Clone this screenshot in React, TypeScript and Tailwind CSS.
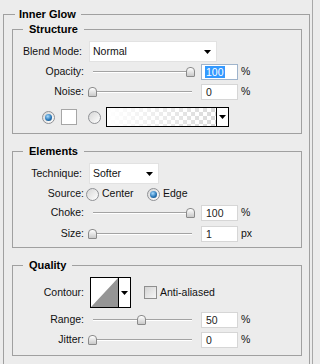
import React from "react";

const FONT = "font-['Liberation_Sans',Arial,sans-serif]";

function Arrow() {
  return (
    <svg width="7" height="4" viewBox="0 0 7 4" className="shrink-0">
      <polygon points="0,0 7,0 3.5,4" fill="#000" />
    </svg>
  );
}

function Radio({ checked }: { checked?: boolean }) {
  return (
    <div className="w-[13px] h-[13px] rounded-full border border-[#8f9195] bg-linear-to-br from-[#d6d6d6] to-white flex items-center justify-center shrink-0">
      {checked && (
        <div className="w-[7px] h-[7px] rounded-full bg-[radial-gradient(circle_at_40%_35%,#a8dcff,#2a78b8_55%,#0d3e6a)]" />
      )}
    </div>
  );
}

function Thumb({ left }: { left: number }) {
  return (
    <div
      className="absolute top-[3px] w-[9px] h-[10px] rounded-t-[4px] rounded-b-[1px] border border-[#8a8a8a] bg-linear-to-b from-white to-[#c9c9c9]"
      style={{ left }}
    />
  );
}

function Slider({ value }: { value: number }) {
  return (
    <div className="relative w-[107px] h-[16px] shrink-0 ml-[4px]">
      <div className="absolute left-[5px] right-[3px] top-[7px] h-px bg-[#a3a3a3]" />
      <div className="absolute left-[5px] right-[3px] top-[8px] h-px bg-white" />
      <Thumb left={Math.round((value / 100) * 98)} />
    </div>
  );
}

function NumInput({ value, selected }: { value: string; selected?: boolean }) {
  return (
    <div
      className={`ml-[6px] w-[37px] h-[16px] bg-white border ${
        selected ? "border-[#9fb4cc]" : "border-[#d6d6d6]"
      } flex items-center pl-[3px] text-[10.5px] leading-none text-[#222] shrink-0`}
    >
      {selected ? (
        <span className="bg-[#3399ff] text-white px-px leading-[12px]">{value}</span>
      ) : (
        <span className="pl-px">{value}</span>
      )}
    </div>
  );
}

function SliderRow({
  label,
  value,
  text,
  unit,
  selected,
  mt,
}: {
  label: string;
  value: number;
  text: string;
  unit: string;
  selected?: boolean;
  mt: string;
}) {
  return (
    <div className={`flex items-center h-[16px] ${mt}`}>
      <div className="w-[71px] text-right shrink-0">{label}</div>
      <Slider value={value} />
      <NumInput value={text} selected={selected} />
      <div className="ml-[3px]">{unit}</div>
    </div>
  );
}

function Select({ text, width }: { text: string; width: string }) {
  return (
    <div
      className={`ml-[7px] ${width} h-[21px] bg-white border border-[#e2e2e2] flex items-center justify-between pl-[3px] pr-[5px] shrink-0`}
    >
      <span>{text}</span>
      <Arrow />
    </div>
  );
}

function GradientBox() {
  return (
    <div className="ml-[5px] w-[123px] h-[20px] border border-black flex shrink-0">
      <svg width="109" height="18" className="block">
        <defs>
          <pattern id="chk" width="8" height="8" patternUnits="userSpaceOnUse">
            <rect width="8" height="8" fill="#ffffff" />
            <rect width="4" height="4" fill="#d9d9d9" />
            <rect x="4" y="4" width="4" height="4" fill="#d9d9d9" />
          </pattern>
          <linearGradient id="fade" x1="0" x2="1" y1="0" y2="0">
            <stop offset="0" stopColor="#fff" stopOpacity="1" />
            <stop offset="1" stopColor="#fff" stopOpacity="0" />
          </linearGradient>
        </defs>
        <rect width="109" height="18" fill="url(#chk)" />
        <rect width="109" height="18" fill="url(#fade)" />
      </svg>
      <div className="w-px bg-black" />
      <div className="flex-1 bg-white flex items-center justify-center">
        <Arrow />
      </div>
    </div>
  );
}

function ContourBox() {
  return (
    <div className="ml-[6px] w-[41px] h-[31px] border border-black flex shrink-0">
      <svg width="27" height="29" className="block">
        <rect width="27" height="29" fill="#fff" />
        <polygon points="0,29 27,0 27,29" fill="#959595" />
      </svg>
      <div className="w-px bg-black" />
      <div className="flex-1 bg-white flex items-center justify-center">
        <Arrow />
      </div>
    </div>
  );
}

function Box({
  title,
  mt,
  pb,
  children,
}: {
  title: string;
  mt: string;
  pb: string;
  children: React.ReactNode;
}) {
  return (
    <fieldset className={`ml-[8px] w-[290px] border border-[#a0a0a0] ${mt} ${pb}`}>
      <legend className="ml-[10px] pl-[6px] pr-[6px] font-bold text-[11px] leading-[13px] h-[13px] text-black">
        {title}
      </legend>
      {children}
    </fieldset>
  );
}

export default function App() {
  return (
    <div className={`w-[320px] h-[364px] overflow-hidden bg-[#ececec] ${FONT} text-[10.5px] text-[#111]`}>
      <div className="w-[313px] pt-[8px] border-r border-[#a8a8a8] h-[364px]">
        <fieldset className="ml-[3px] w-[307px] border border-[#a0a0a0] pb-[30px]">
          <legend className="ml-[11px] pl-[4px] pr-[5px] font-bold text-[11px] leading-[13px] h-[13px] text-black">
            Inner Glow
          </legend>

          <Box title="Structure" mt="mt-[2px]" pb="pb-[6px]">
            <div className="flex items-center h-[21px] mt-[5px]">
              <div className="w-[69px] text-right shrink-0">Blend Mode:</div>
              <Select text="Normal" width="w-[128px]" />
            </div>
            <SliderRow label="Opacity:" value={100} text="100" unit="%" selected mt="mt-[2px]" />
            <SliderRow label="Noise:" value={0} text="0" unit="%" mt="mt-[4px]" />
            <div className="flex items-center h-[20px] mt-[7px]">
              <div className="ml-[29px]">
                <Radio checked />
              </div>
              <div className="ml-[6px] w-[16px] h-[16px] bg-white border border-[#a6a6a6] shrink-0" />
              <div className="ml-[11px]">
                <Radio />
              </div>
              <GradientBox />
            </div>
          </Box>

          <Box title="Elements" mt="mt-[11px]" pb="pb-[5px]">
            <div className="flex items-center h-[21px] mt-[5px]">
              <div className="w-[69px] text-right shrink-0">Technique:</div>
              <Select text="Softer" width="w-[70px]" />
            </div>
            <div className="flex items-center h-[16px] mt-[2px]">
              <div className="w-[71px] text-right shrink-0">Source:</div>
              <div className="ml-[2px]">
                <Radio />
              </div>
              <span className="ml-[3px] w-[45px]">Center</span>
              <Radio checked />
              <span className="ml-[3px]">Edge</span>
            </div>
            <SliderRow label="Choke:" value={100} text="100" unit="%" mt="mt-[3px]" />
            <SliderRow label="Size:" value={0} text="1" unit="px" mt="mt-[5px]" />
          </Box>

          <Box title="Quality" mt="mt-[11px]" pb="pb-[7px]">
            <div className="flex items-center h-[31px] mt-[5px]">
              <div className="w-[71px] text-right shrink-0">Contour:</div>
              <ContourBox />
              <div className="ml-[13px] w-[13px] h-[13px] border border-[#8f8f8f] bg-linear-to-br from-[#d4d4d4] to-[#f6f6f6] shrink-0" />
              <span className="ml-[3px]">Anti-aliased</span>
            </div>
            <SliderRow label="Range:" value={50} text="50" unit="%" mt="mt-[4px]" />
            <SliderRow label="Jitter:" value={0} text="0" unit="%" mt="mt-[4px]" />
          </Box>
        </fieldset>
      </div>
    </div>
  );
}
